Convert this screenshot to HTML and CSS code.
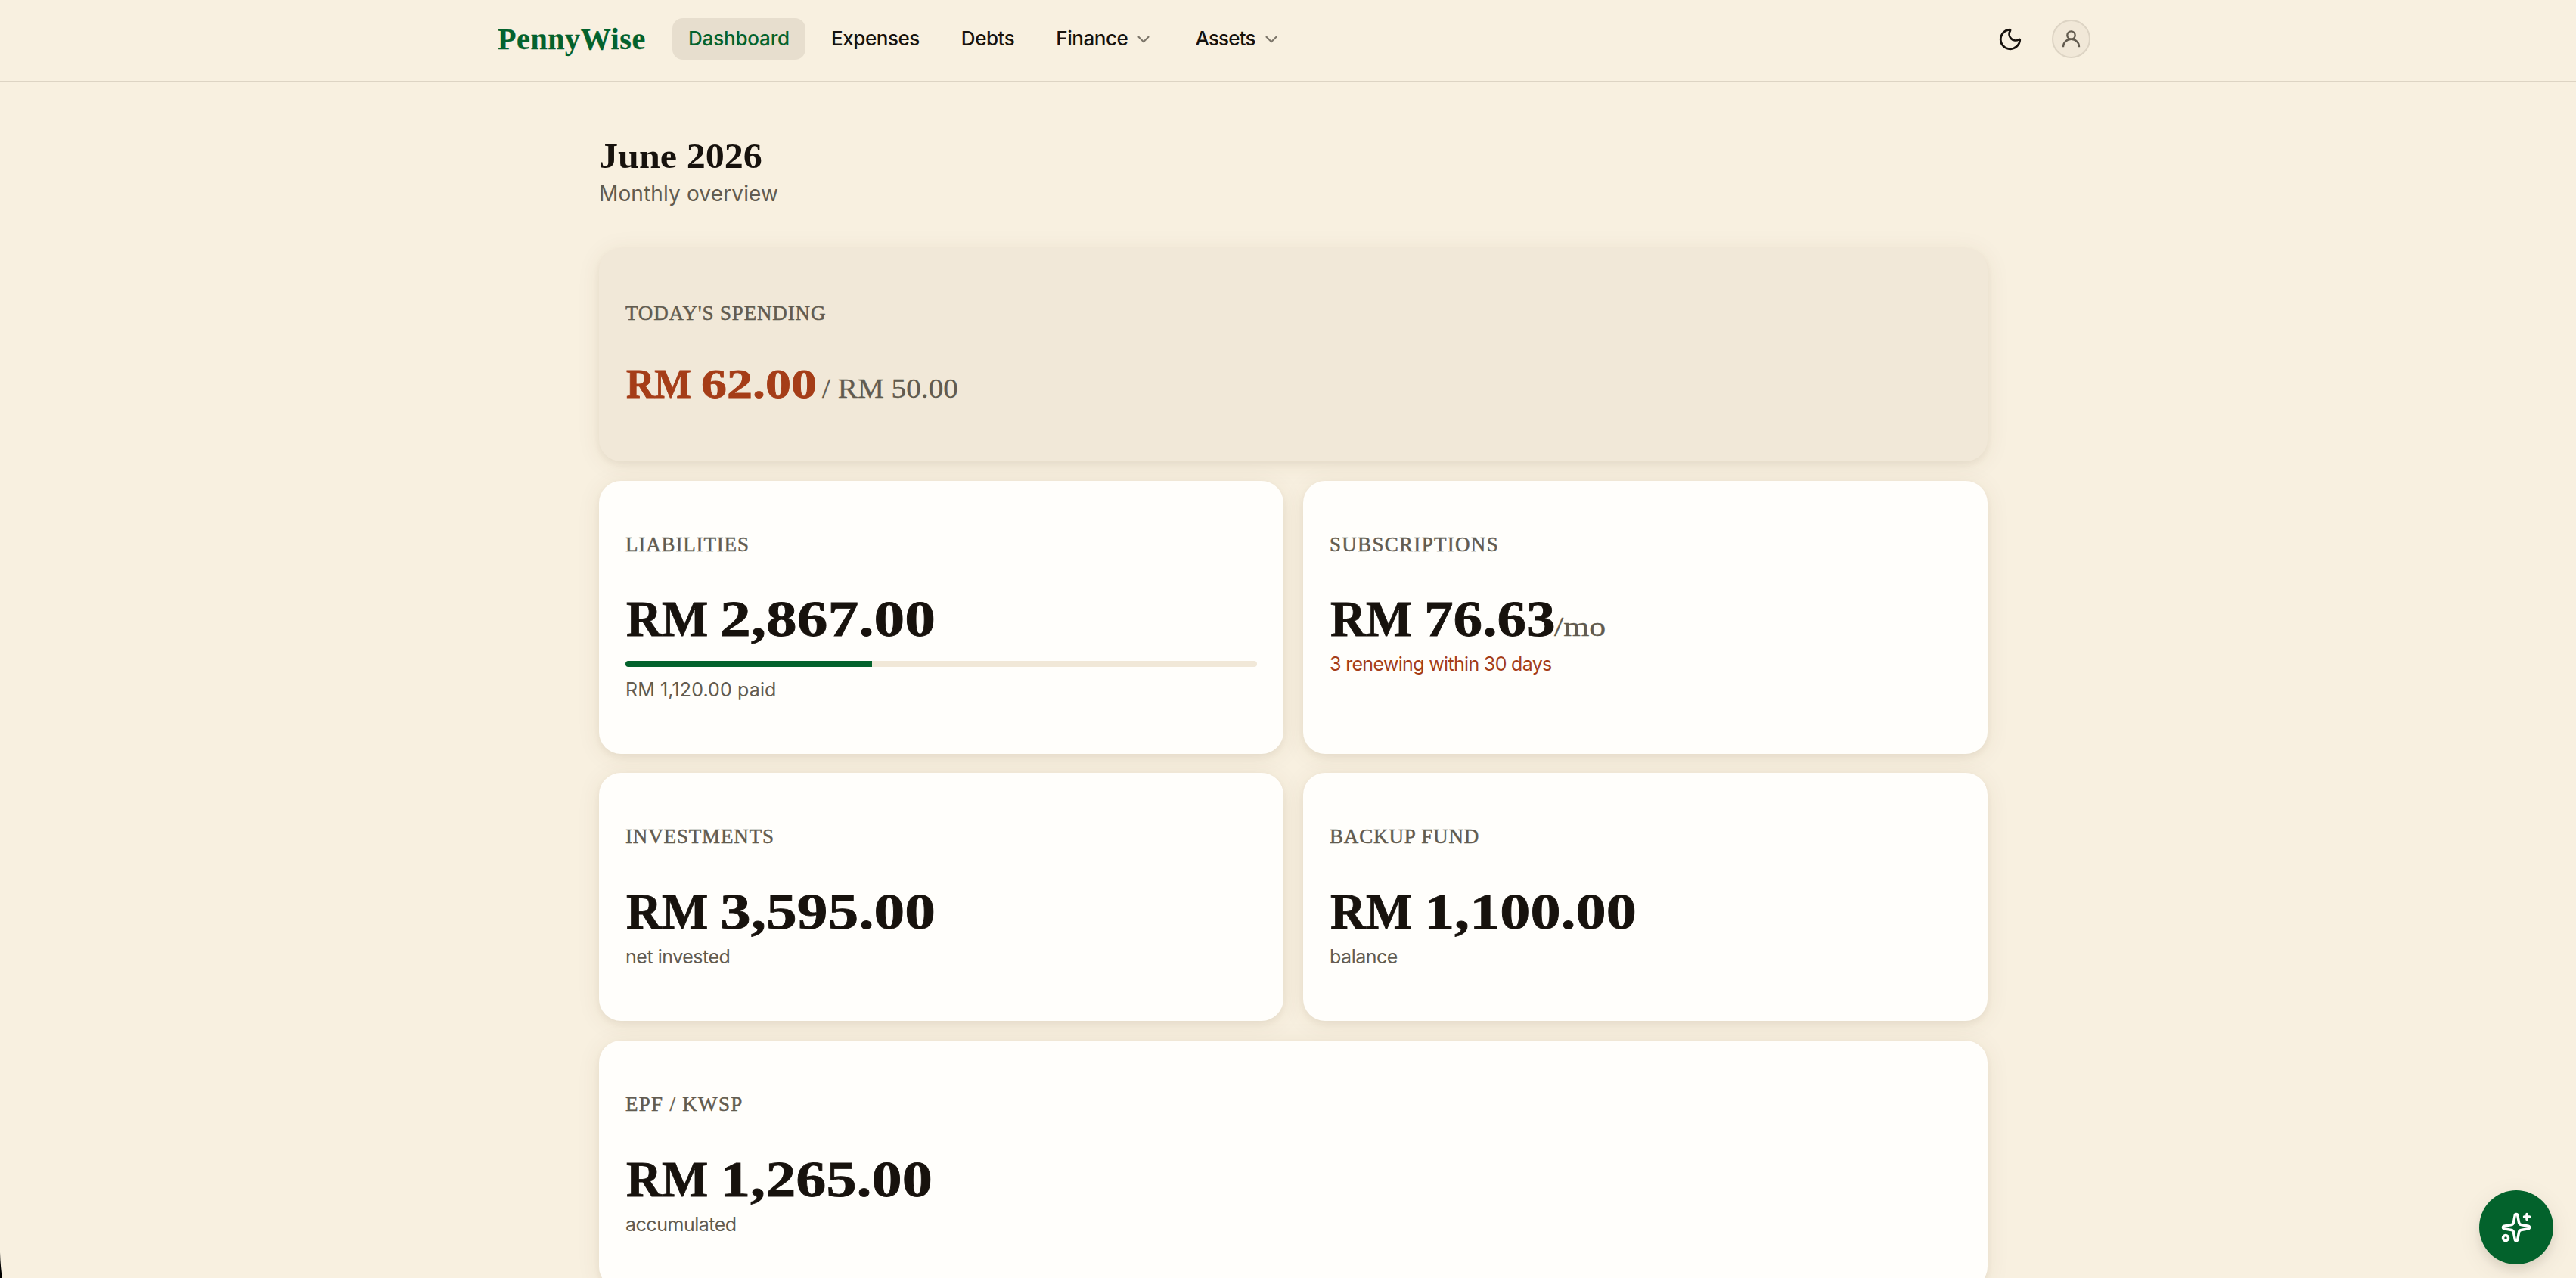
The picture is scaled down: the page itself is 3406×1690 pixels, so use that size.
FILE: index.html
```html
<!DOCTYPE html>
<html lang="en">
<head>
<meta charset="utf-8">
<title>PennyWise</title>
<link rel="stylesheet" href="styles.css">
</head>
<body>
<header class="topbar">
  <div class="topbar-inner">
    <a class="logo">PennyWise</a>
    <nav class="nav">
      <a class="nav-item active">Dashboard</a>
      <a class="nav-item">Expenses</a>
      <a class="nav-item">Debts</a>
      <a class="nav-item">Finance <svg class="chevron" viewBox="0 0 24 24"><path d="m6 9 6 6 6-6"/></svg></a>
      <a class="nav-item assets">Assets <svg class="chevron" viewBox="0 0 24 24"><path d="m6 9 6 6 6-6"/></svg></a>
    </nav>
    <div class="actions">
      <svg class="moon" viewBox="0 0 24 24"><path d="M20.985 12.486a9 9 0 1 1-9.473-9.472c.405-.022.617.46.402.803a6 6 0 0 0 8.268 8.268c.344-.215.825-.004.803.401"/></svg>
      <span class="avatar"><svg viewBox="0 0 24 24"><circle cx="12" cy="7.6" r="4.6"/><path d="M2.7 21.5v-.6a9.3 8.7 0 0 1 18.6 0v.6"/></svg></span>
    </div>
  </div>
</header>
<main class="main">
  <h1 class="title">June 2026</h1>
  <p class="subtitle">Monthly overview</p>
  <div class="cards">
    <section class="card wide today">
      <h2 class="label">TODAY'S SPENDING</h2>
      <div class="amount small over"><span class="cur">RM</span> <span class="num">62.00</span> <span class="limit">/ RM 50.00</span></div>
    </section>
    <section class="card tall">
      <h2 class="label">LIABILITIES</h2>
      <div class="amount"><span class="cur">RM</span> <span class="num">2,867.00</span></div>
      <div class="track"><div class="fill" style="width:39.06%"></div></div>
      <p class="note paid">RM 1,120.00 paid</p>
    </section>
    <section class="card tall">
      <h2 class="label loose">SUBSCRIPTIONS</h2>
      <div class="amount"><span class="cur">RM</span> <span class="num narrow">76.63</span><span class="per">/mo</span></div>
      <p class="note warn">3 renewing within 30 days</p>
    </section>
    <section class="card">
      <h2 class="label">INVESTMENTS</h2>
      <div class="amount"><span class="cur">RM</span> <span class="num">3,595.00</span></div>
      <p class="note">net invested</p>
    </section>
    <section class="card">
      <h2 class="label">BACKUP FUND</h2>
      <div class="amount"><span class="cur">RM</span> <span class="num tight">1,100.00</span></div>
      <p class="note">balance</p>
    </section>
    <section class="card wide">
      <h2 class="label loose">EPF / KWSP</h2>
      <div class="amount"><span class="cur">RM</span> <span class="num tight">1,265.00</span></div>
      <p class="note">accumulated</p>
    </section>
  </div>
</main>
<button class="fab" aria-label="Assistant"><svg viewBox="0 0 24 24"><path d="M11.017 2.814a1 1 0 0 1 1.966 0l1.051 5.558a2 2 0 0 0 1.594 1.594l5.558 1.051a1 1 0 0 1 0 1.966l-5.558 1.051a2 2 0 0 0-1.594 1.594l-1.051 5.558a1 1 0 0 1-1.966 0l-1.051-5.558a2 2 0 0 0-1.594-1.594l-5.558-1.051a1 1 0 0 1 0-1.966l5.558-1.051a2 2 0 0 0 1.594-1.594z"/><path d="M20 2v4M22 4h-4"/><circle cx="4" cy="20" r="2"/></svg></button>
<svg class="corner" viewBox="0 0 4 34"><path d="M0 0Q.6 20 3 34H0z"/></svg>
</body>
</html>
```
FILE: styles.css
```css
:root {
  --bg: #f8f0e0;
  --surface: #fffefb;
  --sand: #f1e8d8;
  --line: #ddd4c4;
  --ink: #17120d;
  --muted: #625b4f;
  --green: #03622c;
  --rust: #a53d18;
}
* { box-sizing: border-box; }
html, body { height: 100%; }
body {
  margin: 0;
  overflow: hidden;
  background: var(--bg);
  color: var(--ink);
  font-family: Inter, "Liberation Sans", sans-serif;
}
h1, h2, p { margin: 0; font-weight: 400; }
svg {
  display: block;
  fill: none;
  stroke: currentColor;
  stroke-width: 2;
  stroke-linecap: round;
  stroke-linejoin: round;
}
.logo, .title, .label, .amount { font-family: "Liberation Serif", serif; }

.topbar {
  height: 109px;
  border-bottom: 2px solid var(--line);
  padding: 0 0 4px 16px;
}
.topbar-inner {
  width: 2106px;
  height: 100%;
  margin: 0 auto;
  display: flex;
  align-items: center;
}
.logo {
  width: 231px;
  font-size: 40px;
  line-height: 48px;
  font-weight: 700;
  letter-spacing: .6px;
  color: var(--green);
  -webkit-text-stroke: .3px;
}
.nav { display: flex; gap: 11px; }
.nav-item {
  height: 55px;
  padding: 0 22px 2px;
  border-radius: 14px;
  display: flex;
  align-items: center;
  gap: 8px;
  font-size: 26px;
  font-weight: 500;
  letter-spacing: -.45px;
}
.nav-item.active {
  width: 176px;
  padding-left: 21px;
  margin-right: 1px;
  background: #e7dece;
  color: var(--green);
  letter-spacing: -.19px;
}
.nav-item.assets { letter-spacing: -.8px; }
.chevron { width: 26px; height: 26px; margin-top: 3px; color: #7d766a; }
.actions { margin-left: auto; display: flex; align-items: center; gap: 38px; }
.moon { width: 34px; height: 34px; margin-top: 1px; }
.avatar {
  width: 51px;
  height: 51px;
  border: 2px solid var(--line);
  border-radius: 50%;
  background: var(--sand);
  color: var(--muted);
  display: grid;
  place-items: center;
}
.avatar svg { width: 27px; height: 27px; stroke-width: 2.1; stroke-linecap: butt; }

.main { width: 1850px; margin: 0 auto; padding: 69px 0 0 14px; }
.title {
  font-size: 46px;
  line-height: 58px;
  font-weight: 700;
  transform: scaleX(1.09);
  transform-origin: left;
}
.subtitle { font-size: 28px; line-height: 40px; letter-spacing: .14px; color: var(--muted); }

.cards {
  margin-top: 52px;
  display: grid;
  grid-template-columns: 1fr 1fr;
  grid-template-rows: 282px 361px 328px 328px;
  column-gap: 26px;
  row-gap: 25.5px;
}
.card {
  padding: 66px 35px 0;
  border-radius: 29px;
  background: var(--surface);
  box-shadow: 0 4px 8px rgba(60, 45, 20, .06), 0 4px 32px rgba(90, 65, 20, .08);
}
.wide { grid-column: 1 / -1; }
.today { background: var(--sand); padding-top: 68px; }
.label {
  font-size: 27px;
  line-height: 36px;
  letter-spacing: .85px;
  color: var(--muted);
  -webkit-text-stroke: .5px;
}
.label.loose { letter-spacing: 1.3px; }
.amount {
  height: 76px;
  margin-top: 43px;
  display: flex;
  align-items: baseline;
  font-size: 68px;
  line-height: 76px;
  font-weight: 700;
  white-space: nowrap;
  -webkit-text-stroke: .8px;
}
.tall .amount { margin-top: 42px; }
.amount.small { height: 60px; margin-top: 46px; font-size: 54px; line-height: 60px; }
.over { color: var(--rust); }
.cur { width: 1.83em; margin-left: 1px; transform: scaleX(.955); transform-origin: left; }
.num { transform: scaleX(1.197); transform-origin: left; }
.num.tight { transform: scaleX(1.18); }
.num.narrow { width: 171px; transform: scaleX(1.135); }
.small .num { width: 160px; transform: scaleX(1.26); }
.limit, .per {
  font-size: 36px;
  line-height: 1;
  font-weight: 400;
  color: var(--muted);
  -webkit-text-stroke: .3px;
}
.limit { transform: scaleX(1.09); transform-origin: left; }
.per { margin-left: 1px; transform: scaleX(1.22); transform-origin: left; }
.track {
  height: 8px;
  margin: 18px 0 13px;
  border-radius: 4px;
  background: var(--sand);
  overflow: hidden;
}
.fill { height: 100%; background: var(--green); }
.note {
  margin-top: 5px;
  font-size: 25px;
  line-height: 34px;
  letter-spacing: -.48px;
  color: var(--muted);
}
.note.paid { letter-spacing: .12px; }
.note.warn { letter-spacing: -.67px; color: var(--rust); }

.fab {
  position: fixed;
  right: 30px;
  bottom: 18px;
  width: 98px;
  height: 98px;
  border: 0;
  border-radius: 50%;
  background: var(--green);
  color: #fff;
  display: grid;
  place-items: center;
  box-shadow: 0 8px 12px rgba(60, 45, 20, .09), 0 8px 32px rgba(60, 45, 20, .08);
}
.fab svg { width: 42px; height: 42px; }
.corner { position: fixed; left: 0; bottom: 0; width: 4px; height: 34px; fill: #000; stroke: none; }
```
